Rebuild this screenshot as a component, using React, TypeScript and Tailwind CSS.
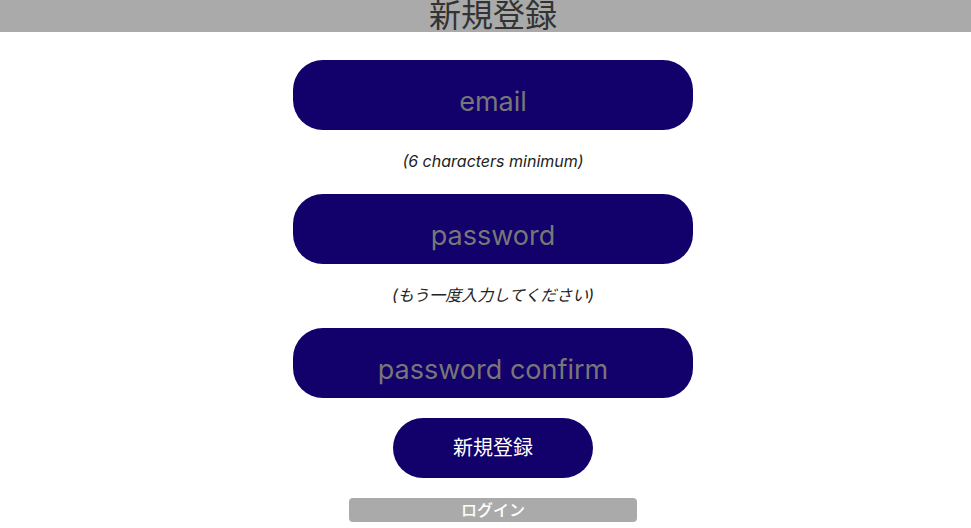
export default function App() {
  const font = { fontFamily: 'Inter, "Noto Sans CJK JP", sans-serif' };
  const field =
    "w-[400px] h-[70px] rounded-[30px] bg-[#12006b] text-center text-[27px] pt-3 text-white placeholder:text-[#777777] outline-none";
  return (
    <div className="min-h-screen bg-white" style={font}>
      {/* Header */}
      <div className="h-8 bg-[#aaaaaa] flex items-center justify-center pl-[15px]">
        <h1 className="text-[32px] leading-8 text-[#333333] font-normal">新規登録</h1>
      </div>

      <form className="flex flex-col items-center pt-7 pl-[15px]" onSubmit={(e) => e.preventDefault()}>
        <input type="email" placeholder="email" className={field} />
        <p className="mt-[19px] mb-[21px] h-6 leading-6 text-base italic text-[#222222]">(6 characters minimum)</p>
        <input type="password" placeholder="password" className={field} />
        <p className="mt-[19px] mb-[21px] h-6 leading-6 text-base italic text-[#222222]">(もう一度入力してください)</p>
        <input type="password" placeholder="password confirm" className={field} />
        <button
          type="submit"
          className="mt-5 w-[200px] h-[60px] rounded-[30px] bg-[#12006b] text-white text-xl"
        >
          新規登録
        </button>
        <button type="button" className="mt-5 w-[288px] h-6 rounded bg-[#aaaaaa] text-white text-base font-medium leading-6">
          ログイン
        </button>
      </form>
    </div>
  );
}
